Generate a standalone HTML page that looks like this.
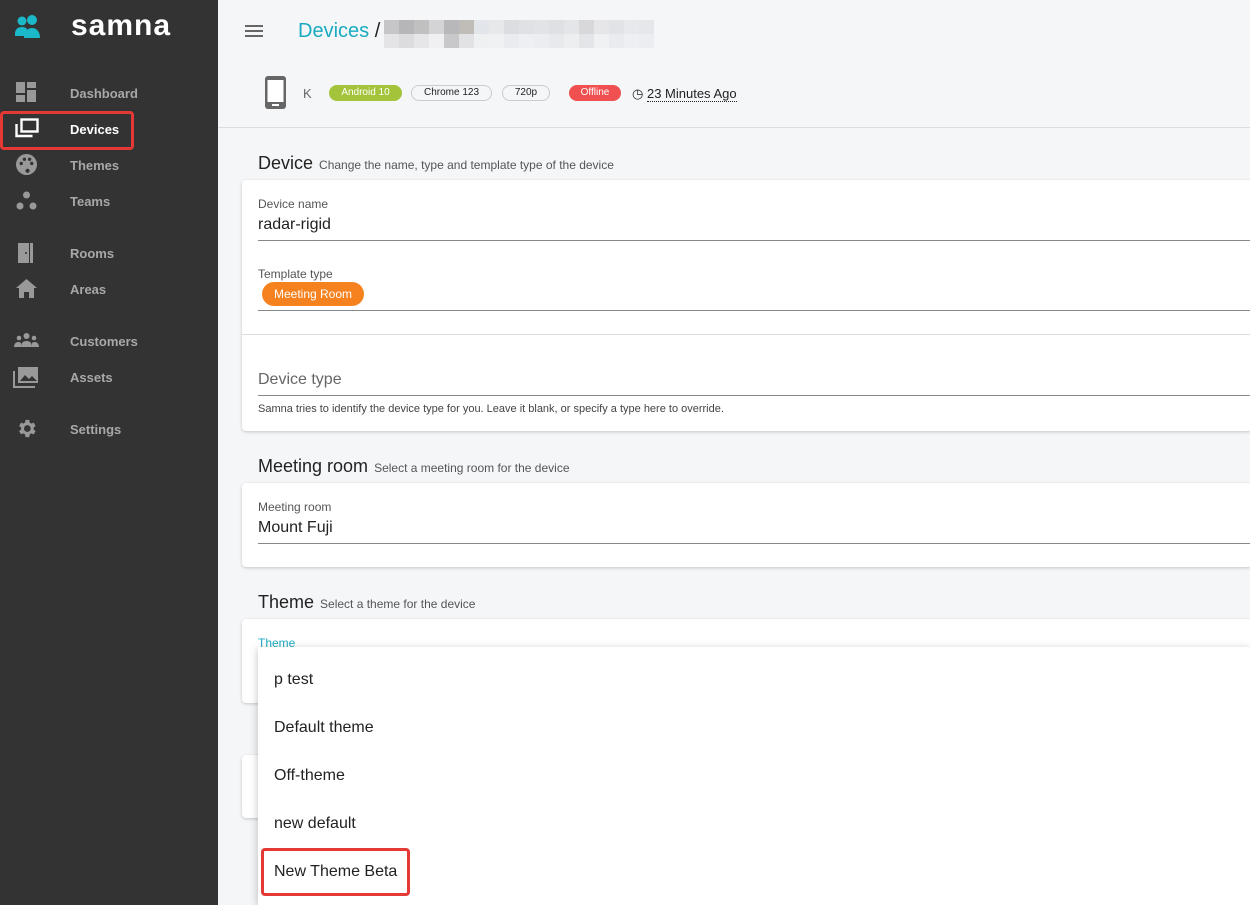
<!DOCTYPE html>
<html><head><style>
*{box-sizing:border-box;margin:0;padding:0}
body{width:1250px;height:905px;overflow:hidden;font-family:"Liberation Sans",sans-serif;background:#f5f6f8;position:relative}
.sb{position:absolute;left:0;top:0;width:218px;height:905px;background:#333}
.logo{position:absolute;left:71px;top:9px;color:#fff;font-size:30px;font-weight:bold;letter-spacing:1px}
.nav{position:absolute;left:70px;font-size:13px;font-weight:bold;color:#a8a8a8}
.ic{position:absolute;left:15px}
.card{position:absolute;left:242px;width:1010px;background:#fff;border-radius:4px;box-shadow:0 1px 3px rgba(0,0,0,.2)}
.h{position:absolute;left:258px;font-size:18px;color:#222}
.h span{font-size:12px;color:#555;margin-left:6px}
.lbl{position:absolute;left:258px;font-size:12px;color:#555}
.val{position:absolute;left:258px;font-size:16px;color:#222}
.line{position:absolute;left:258px;right:0;height:1px;background:#888}
.chip{position:absolute;top:85px;height:16px;border-radius:8px;font-size:10px;text-align:center;line-height:16px}
.chip.o{border:1px solid #ccc;line-height:14px;color:#222}
.dd{position:absolute;left:258px;top:647px;width:992px;height:258px;background:#fff;box-shadow:0 2px 8px rgba(0,0,0,.25)}
.it{position:absolute;left:16px;font-size:16px;color:#222}
.blur{position:absolute;left:384px;top:20px;width:285px;height:28px;display:grid;grid-template-columns:repeat(19,15px);grid-template-rows:14px 14px}
</style></head><body>
<div class="sb">
<svg class="ic" style="top:14px" width="26" height="26" viewBox="0 0 26 26"><circle cx="7" cy="7" r="4.5" fill="#1ab8c8"/><circle cx="17" cy="6" r="5" fill="#1ab8c8"/><path d="M0 20c0-5 3-7 7-7s5 2 5 2l-1 7H0z" fill="#1ab8c8"/><path d="M9 24c0-6 3-10 8-10s8 4 8 10z" fill="#1ab8c8"/></svg>
<div class="logo">samna</div>
<svg class="ic" style="top:82px;left:16px" width="20" height="20" viewBox="0 0 20 20" fill="#999"><rect x="0" y="0" width="9" height="11"/><rect x="11" y="0" width="9" height="6"/><rect x="0" y="13" width="9" height="7"/><rect x="11" y="8" width="9" height="12"/></svg>
<div class="nav" style="top:86px">Dashboard</div>
<div style="position:absolute;left:0;top:111px;width:134px;height:39px;border:3px solid #e53935;border-radius:4px"></div>
<svg class="ic" style="top:118px;left:14px" width="25" height="20" viewBox="0 0 25 20" fill="none" stroke="#fff" stroke-width="2.4"><rect x="7.5" y="1.5" width="16" height="12"/><path d="M2.5 6v12h16"/></svg>
<div class="nav" style="top:122px;color:#fff">Devices</div>
<svg class="ic" style="top:154px;left:16px" width="21" height="21" viewBox="0 0 20 20"><circle cx="10" cy="10" r="10" fill="#999"/><circle cx="5" cy="9" r="1.6" fill="#333"/><circle cx="8" cy="5" r="1.6" fill="#333"/><circle cx="13" cy="5" r="1.6" fill="#333"/><circle cx="15" cy="9" r="1.6" fill="#333"/><circle cx="11" cy="16" r="2" fill="#333"/></svg>
<div class="nav" style="top:158px">Themes</div>
<svg class="ic" style="top:191px;left:16px" width="21" height="20" viewBox="0 0 21 20" fill="#999"><circle cx="10.5" cy="4" r="3.5"/><circle cx="4" cy="15" r="3.5"/><circle cx="17" cy="15" r="3.5"/></svg>
<div class="nav" style="top:194px">Teams</div>
<svg class="ic" style="top:243px;left:17px" width="18" height="20" viewBox="0 0 18 20" fill="#999"><rect x="1" y="0" width="11" height="20"/><rect x="13" y="0" width="3" height="20"/><circle cx="9" cy="10" r="1" fill="#333"/></svg>
<div class="nav" style="top:246px">Rooms</div>
<svg class="ic" style="top:279px;left:16px" width="21" height="19" viewBox="0 0 21 19" fill="#999"><path d="M10.5 0L0 9h3v10h5v-6h5v6h5V9h3z"/></svg>
<div class="nav" style="top:282px">Areas</div>
<svg class="ic" style="top:333px;left:14px" width="25" height="14" viewBox="0 0 25 14" fill="#999"><circle cx="12.5" cy="3" r="3"/><circle cx="5" cy="5" r="2.3"/><circle cx="20" cy="5" r="2.3"/><path d="M7 14c0-4 2-6 5.5-6S18 10 18 14zM0 14c0-3 2-5 4-5s3 1 3 1v4zM25 14c0-3-2-5-4-5s-3 1-3 1v4z"/></svg>
<div class="nav" style="top:334px">Customers</div>
<svg class="ic" style="top:366px;left:13px" width="26" height="22" viewBox="0 0 26 22"><path d="M1 5v16h21" fill="none" stroke="#999" stroke-width="2"/><rect x="5" y="1" width="20" height="16" fill="#999"/><path d="M7 15l5-6 4 4 3-3 5 5z" fill="#333"/></svg>
<div class="nav" style="top:370px">Assets</div>
<svg class="ic" style="top:417px;left:15px" width="23" height="23" viewBox="0 0 24 24" fill="#999"><path d="M19.4 13a7.5 7.5 0 000-2l2.1-1.6-2-3.5-2.5 1a7 7 0 00-1.7-1L14.9 3h-4l-.4 2.9a7 7 0 00-1.7 1l-2.5-1-2 3.5L6.4 11a7.5 7.5 0 000 2l-2.1 1.6 2 3.5 2.5-1a7 7 0 001.7 1l.4 2.9h4l.4-2.9a7 7 0 001.7-1l2.5 1 2-3.5zM12.9 15.5a3.5 3.5 0 110-7 3.5 3.5 0 010 7z"/></svg>
<div class="nav" style="top:422px">Settings</div>
</div>
<div style="position:absolute;left:218px;top:127px;right:0;height:1px;background:#ddd"></div>
<svg style="position:absolute;left:245px;top:24px" width="18" height="14" viewBox="0 0 18 14" fill="#666"><rect y="1" width="18" height="2"/><rect y="6" width="18" height="2"/><rect y="11" width="18" height="2"/></svg>
<div style="position:absolute;left:298px;top:20px;font-size:20px;color:#1aabc0">Devices <span style="color:#222">/</span></div>
<div class="blur">
<i style="background:#c6c6c8"></i><i style="background:#b6b6b8"></i><i style="background:#c0c0c0"></i><i style="background:#d4d4d6"></i><i style="background:#b8b8ba"></i><i style="background:#c0bdb8"></i><i style="background:#e2e6ea"></i><i style="background:#e6e8ea"></i><i style="background:#dcdde0"></i><i style="background:#e0e1e4"></i><i style="background:#e2e3e6"></i><i style="background:#dfe0e3"></i><i style="background:#e4e5e8"></i><i style="background:#d8d8da"></i><i style="background:#e6e6e8"></i><i style="background:#e2e3e6"></i><i style="background:#e8e9ec"></i><i style="background:#e6e7ea"></i><i style="background:#f5f6f8"></i>
<i style="background:#e4e4e6"></i><i style="background:#dcdcde"></i><i style="background:#e6e6e8"></i><i style="background:#f0f0f2"></i><i style="background:#c8c8ca"></i><i style="background:#e2e2e4"></i><i style="background:#eef0f2"></i><i style="background:#f0f1f3"></i><i style="background:#eaebee"></i><i style="background:#eeeff2"></i><i style="background:#ecedf0"></i><i style="background:#e8e9ec"></i><i style="background:#eceef0"></i><i style="background:#e4e5e8"></i><i style="background:#f0f1f3"></i><i style="background:#eaebee"></i><i style="background:#eeeff2"></i><i style="background:#ecedf0"></i><i style="background:#f5f6f8"></i>
</div>
<svg style="position:absolute;left:264px;top:75px" width="24" height="35" viewBox="0 0 24 35"><rect x="1" y="1" width="21" height="33" rx="3" fill="#666"/><rect x="3.5" y="5" width="16" height="22" fill="#fff"/><rect x="8" y="29" width="7" height="2" fill="#fff"/></svg>
<div style="position:absolute;left:303px;top:86px;font-size:13px;color:#666">K</div>
<div class="chip" style="left:329px;width:73px;background:#a3c43a;color:#fff">Android 10</div>
<div class="chip o" style="left:411px;width:81px">Chrome 123</div>
<div class="chip o" style="left:502px;width:48px">720p</div>
<div class="chip" style="left:569px;width:52px;background:#f05050;color:#fff">Offline</div>
<div style="position:absolute;left:632px;top:86px;font-size:13px;color:#222">◷ <span style="border-bottom:1px dotted #222">23 Minutes Ago</span></div>

<div class="h" style="top:153px">Device<span>Change the name, type and template type of the device</span></div>
<div class="card" style="top:180px;height:251px"></div>
<div class="lbl" style="top:197px">Device name</div>
<div class="val" style="top:216px">radar-rigid</div>
<div class="line" style="top:240px"></div>
<div class="lbl" style="top:267px">Template type</div>
<div style="position:absolute;left:262px;top:282px;width:102px;height:24px;border-radius:12px;background:#f5821f;color:#fff;font-size:12px;text-align:center;line-height:24px">Meeting Room</div>
<div class="line" style="top:310px"></div>
<div style="position:absolute;left:242px;right:0;top:334px;height:1px;background:#ddd"></div>
<div class="val" style="top:371px;color:#666">Device type</div>
<div class="line" style="top:395px"></div>
<div style="position:absolute;left:258px;top:403px;font-size:11px;color:#444">Samna tries to identify the device type for you. Leave it blank, or specify a type here to override.</div>

<div class="h" style="top:456px">Meeting room<span>Select a meeting room for the device</span></div>
<div class="card" style="top:483px;height:84px"></div>
<div class="lbl" style="top:500px">Meeting room</div>
<div class="val" style="top:519px">Mount Fuji</div>
<div class="line" style="top:543px"></div>

<div class="h" style="top:592px">Theme<span>Select a theme for the device</span></div>
<div class="card" style="top:619px;height:84px"></div>
<div class="lbl" style="top:636px;color:#1aabc0">Theme</div>
<div class="card" style="top:755px;height:63px"></div>
<div class="dd">
<div class="it" style="top:24px">p test</div>
<div class="it" style="top:72px">Default theme</div>
<div class="it" style="top:120px">Off-theme</div>
<div class="it" style="top:168px">new default</div>
<div style="position:absolute;left:3px;top:201px;width:149px;height:48px;border:3px solid #e53935;border-radius:4px"></div>
<div class="it" style="top:216px">New Theme Beta</div>
</div>
</body></html>
